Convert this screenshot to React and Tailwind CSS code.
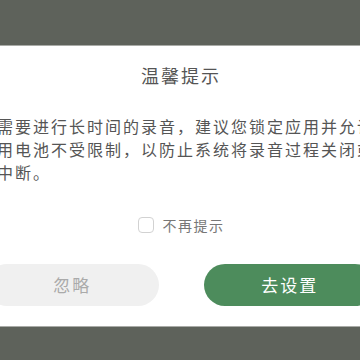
export default function App() {
  return (
    <div
      className="w-[360px] h-[360px] overflow-hidden bg-[#5e625b] pt-[45px]"
      style={{ fontFamily: '"Noto Sans CJK SC", "Noto Sans", sans-serif' }}
    >
      <div className="ml-[-34px] w-[430px] h-[282px] bg-white border-y border-[#a9aba7] flex flex-col">
        <div className="pt-[17px] text-center text-[18px] leading-[24px] tracking-[2px] text-[#555]">
          温馨提示
        </div>

        <div className="mt-[28px] pl-[31px] text-[16px] leading-[23px] tracking-[2px] text-[#555] whitespace-nowrap">
          <div>需要进行长时间的录音，建议您锁定应用并允许</div>
          <div>用电池不受限制，以防止系统将录音过程关闭或</div>
          <div>中断。</div>
        </div>

        <div className="mt-[31px] flex items-center justify-center h-[20px]">
          <span className="w-[16px] h-[16px] rounded-[4px] border border-[#d2d2d2] bg-white mr-[9px]" />
          <span className="text-[14px] leading-[20px] tracking-[1.5px] text-[#777]">
            不再提示
          </span>
        </div>

        <div className="mt-[29px] grid grid-cols-2 gap-[45px] px-5">
          <button className="h-[42px] rounded-full bg-[#f0f0f0] text-[17px] tracking-[2px] text-[#aaa]">
            忽略
          </button>
          <button className="h-[42px] rounded-full bg-[#4d8c5c] text-[17px] tracking-[2px] text-white">
            去设置
          </button>
        </div>
      </div>
    </div>
  );
}
